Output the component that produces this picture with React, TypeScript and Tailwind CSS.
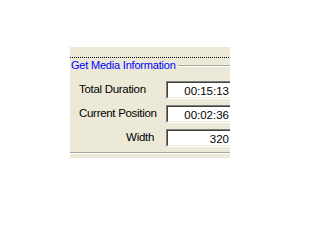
import React from "react";

const Field = ({ label, value, right }: { label: string; value: string; right?: boolean }) => (
  <div className="flex items-start h-[24px]">
    <div className={`w-[96px] shrink-0 whitespace-nowrap tracking-[-0.3px] ${right ? "text-right pr-[12px]" : "pl-[9px]"}`}>{label}</div>
    <div className="shrink-0 w-[70px] h-[18px] border border-t-[#808080] border-l-[#808080] border-b-white border-r-white bg-white">
      <div className="h-full border border-t-[#404040] border-l-[#404040] border-b-[#ece9d8] border-r-[#ece9d8] text-right pr-[5px] leading-[14px] pt-[1px] whitespace-nowrap">
        {value}
      </div>
    </div>
  </div>
);

export default function App() {
  return (
    <div className="w-[300px] h-[206px] bg-white pt-[47px] pl-[70px]">
      <div
        className="w-[160px] h-[111px] bg-[#ece9d8] overflow-hidden text-[11.5px] text-black"
        style={{ fontFamily: '"Liberation Sans", Arial, sans-serif' }}
      >
        <div className="h-[10px]" />
        <div className="h-px w-full" style={{ backgroundImage: "repeating-linear-gradient(to right, #000 0 1px, transparent 1px 2px)" }} />
        <div className="flex items-center h-[12px] mt-[1px]">
          <span className="text-[#0000ff] text-[11px] tracking-[-0.2px] leading-[12px] pl-px pr-[2px] whitespace-nowrap">Get Media Information</span>
          <div className="flex-1 flex flex-col mt-[1px]">
            <div className="h-px bg-[#aca899]" />
            <div className="h-px bg-white" />
          </div>
        </div>
        <div className="mt-[10px]">
          <Field label="Total Duration" value="00:15:13" />
          <Field label="Current Position" value="00:02:36" />
          <Field label="Width" value="320" right />
        </div>
        <div className="mt-[-1px] h-px bg-[#aca899]" />
        <div className="h-px bg-white" />
      </div>
    </div>
  );
}
